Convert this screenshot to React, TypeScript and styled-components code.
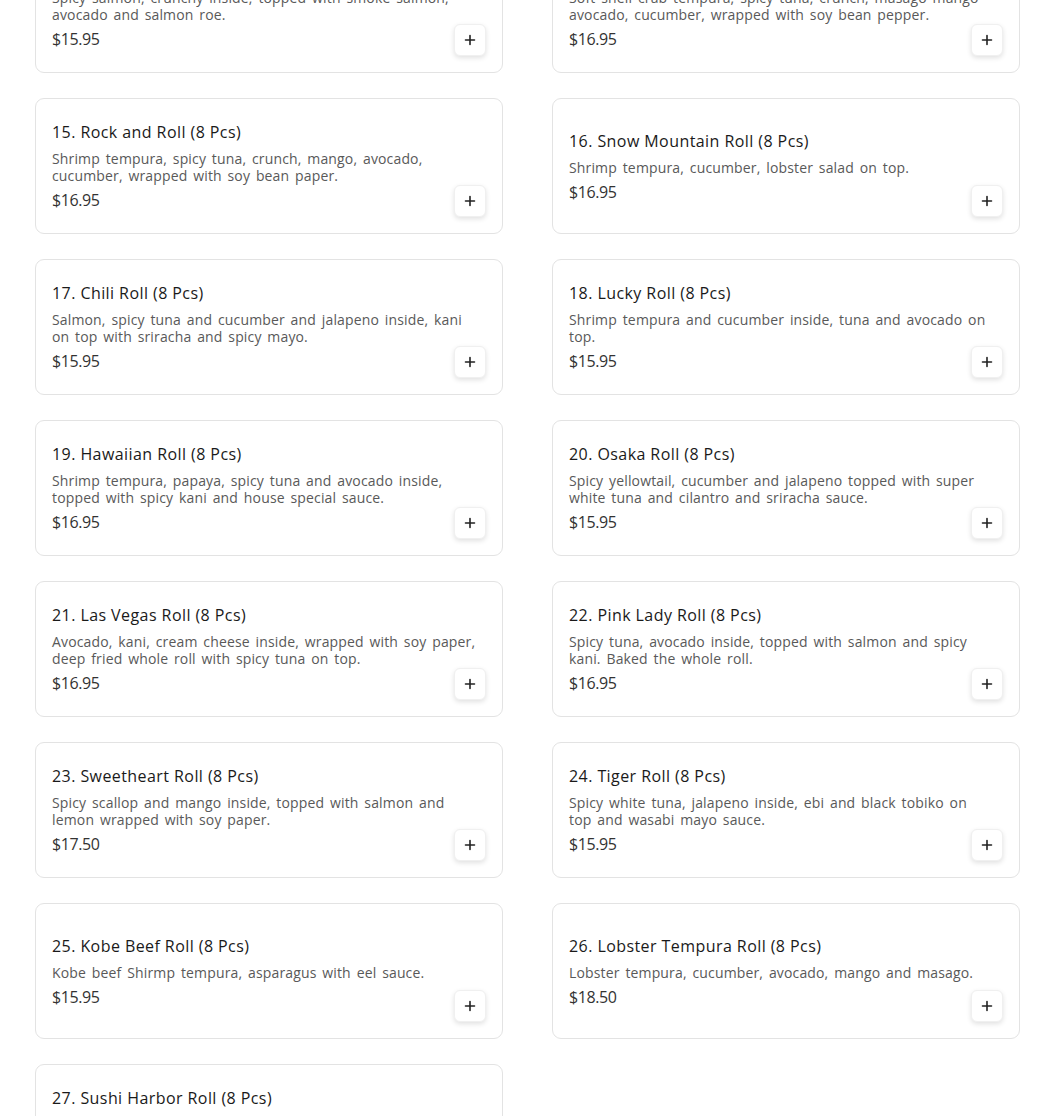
import React from "react";
import styled, { createGlobalStyle } from "styled-components";

const GlobalStyle = createGlobalStyle`
  body {
    margin: 0;
    background: #ffffff;
    font-family: "Open Sans", "Liberation Sans", sans-serif;
  }
`;

type Roll = { name: string; desc: string; price: string };

const rolls: Roll[] = [
  { name: "13. Salmon Lover Roll (8 Pcs)", desc: "Spicy salmon, crunchy inside, topped with smoke salmon, avocado and salmon roe.", price: "$15.95" },
  { name: "14. Crazy Crab Roll (8 Pcs)", desc: "Soft shell crab tempura, spicy tuna, crunch, masago mango avocado, cucumber, wrapped with soy bean pepper.", price: "$16.95" },
  { name: "15. Rock and Roll (8 Pcs)", desc: "Shrimp tempura, spicy tuna, crunch, mango, avocado, cucumber, wrapped with soy bean paper.", price: "$16.95" },
  { name: "16. Snow Mountain Roll (8 Pcs)", desc: "Shrimp tempura, cucumber, lobster salad on top.", price: "$16.95" },
  { name: "17. Chili Roll (8 Pcs)", desc: "Salmon, spicy tuna and cucumber and jalapeno inside, kani on top with sriracha and spicy mayo.", price: "$15.95" },
  { name: "18. Lucky Roll (8 Pcs)", desc: "Shrimp tempura and cucumber inside, tuna and avocado on top.", price: "$15.95" },
  { name: "19. Hawaiian Roll (8 Pcs)", desc: "Shrimp tempura, papaya, spicy tuna and avocado inside, topped with spicy kani and house special sauce.", price: "$16.95" },
  { name: "20. Osaka Roll (8 Pcs)", desc: "Spicy yellowtail, cucumber and jalapeno topped with super white tuna and cilantro and sriracha sauce.", price: "$15.95" },
  { name: "21. Las Vegas Roll (8 Pcs)", desc: "Avocado, kani, cream cheese inside, wrapped with soy paper, deep fried whole roll with spicy tuna on top.", price: "$16.95" },
  { name: "22. Pink Lady Roll (8 Pcs)", desc: "Spicy tuna, avocado inside, topped with salmon and spicy kani. Baked the whole roll.", price: "$16.95" },
  { name: "23. Sweetheart Roll (8 Pcs)", desc: "Spicy scallop and mango inside, topped with salmon and lemon wrapped with soy paper.", price: "$17.50" },
  { name: "24. Tiger Roll (8 Pcs)", desc: "Spicy white tuna, jalapeno inside, ebi and black tobiko on top and wasabi mayo sauce.", price: "$15.95" },
  { name: "25. Kobe Beef Roll (8 Pcs)", desc: "Kobe beef Shirmp tempura, asparagus with eel sauce.", price: "$15.95" },
  { name: "26. Lobster Tempura Roll (8 Pcs)", desc: "Lobster tempura, cucumber, avocado, mango and masago.", price: "$18.50" },
  { name: "27. Sushi Harbor Roll (8 Pcs)", desc: "Shrimp tempura, spicy crab inside, topped with seared salmon, avocado and eel sauce.", price: "$17.95" },
];

const Page = styled.div`
  padding: 0 30px 40px 35px;
  margin-top: -63px;
`;

const Grid = styled.div`
  display: grid;
  grid-template-columns: 468px 468px;
  column-gap: 49px;
  row-gap: 25px;
`;

const Card = styled.div`
  position: relative;
  box-sizing: border-box;
  height: 136px;
  padding: 16px;
  border: 1px solid #e3e3e3;
  border-radius: 9px;
  background: #fff;
  display: flex;
  align-items: center;
`;

const Info = styled.div`
  display: flex;
  flex-direction: column;
  padding-right: 10px;
`;

const Title = styled.div`
  font-size: 16px;
  line-height: 20px;
  font-weight: 500;
  letter-spacing: 0.43px;
  color: #1a1a1a;
`;

const Desc = styled.div`
  margin-top: 8px;
  font-size: 14px;
  line-height: 17px;
  letter-spacing: 0.15px;
  word-spacing: 2px;
  color: #595959;
`;

const Price = styled.div`
  margin-top: 6px;
  font-size: 16px;
  line-height: 20px;
  letter-spacing: -0.4px;
  color: #333;
`;

const AddButton = styled.button`
  position: absolute;
  right: 16px;
  bottom: 16px;
  width: 32px;
  height: 32px;
  padding: 0;
  border: 1px solid #f0f0f0;
  border-radius: 6px;
  background: #fff;
  box-shadow: 0 2px 5px rgba(0, 0, 0, 0.12);
  display: flex;
  align-items: center;
  justify-content: center;
  color: #222;
  cursor: pointer;
`;

const PlusIcon = () => (
  <svg width="12" height="12" viewBox="0 0 12 12" fill="none">
    <path d="M6 1.5v9M1.5 6h9" stroke="currentColor" strokeWidth="1.6" strokeLinecap="round" />
  </svg>
);

const RollCard = ({ roll }: { roll: Roll }) => (
  <Card>
    <Info>
      <Title>{roll.name}</Title>
      <Desc>{roll.desc}</Desc>
      <Price>{roll.price}</Price>
    </Info>
    <AddButton aria-label="Add">
      <PlusIcon />
    </AddButton>
  </Card>
);

export default function App() {
  return (
    <>
      <GlobalStyle />
      <Page>
        <Grid>
          {rolls.map((r) => (
            <RollCard key={r.name} roll={r} />
          ))}
        </Grid>
      </Page>
    </>
  );
}
